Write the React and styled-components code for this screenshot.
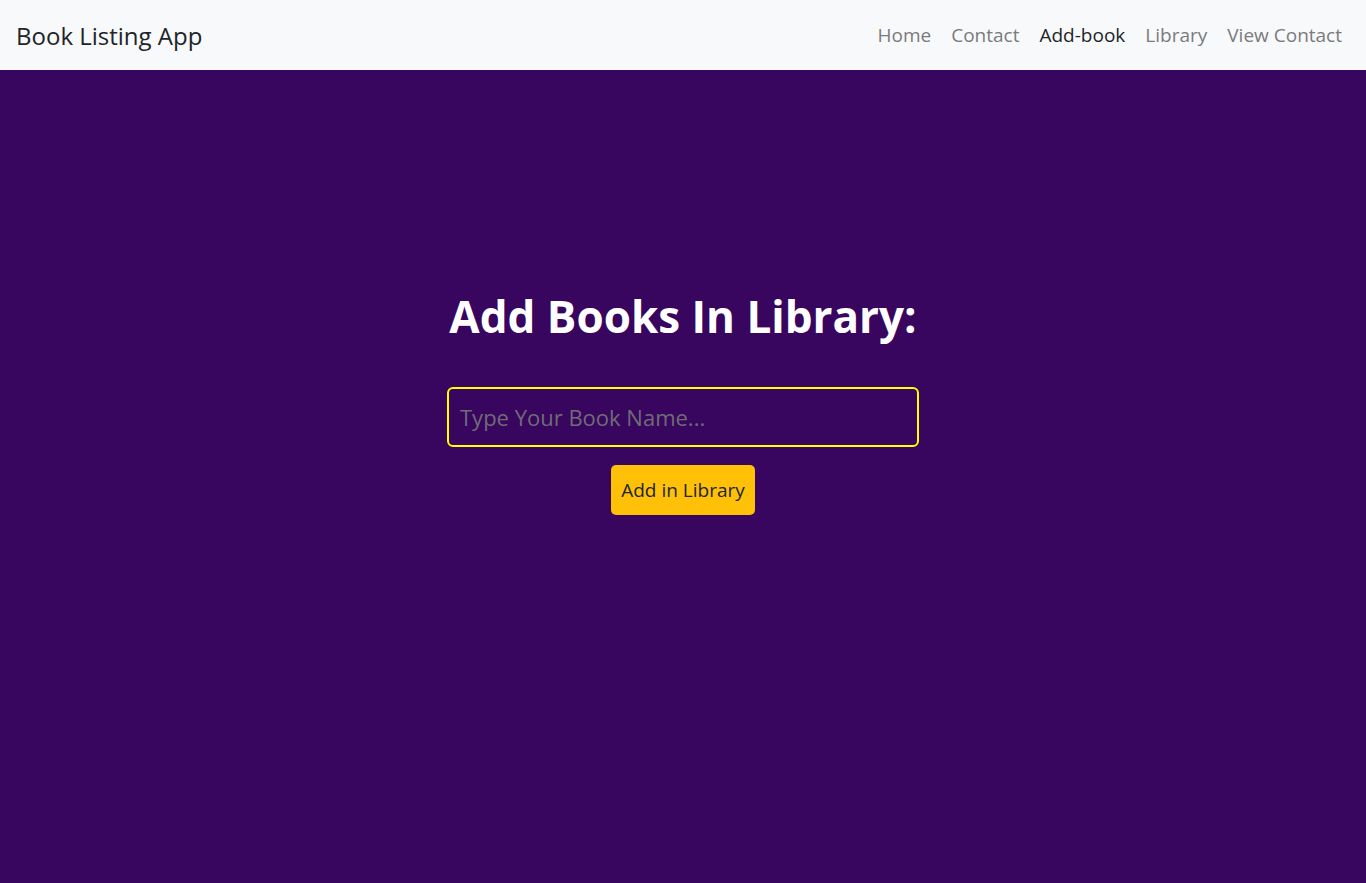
import React, { useState } from 'react'
import styled, { createGlobalStyle } from 'styled-components'

const GlobalStyle = createGlobalStyle`
  * { box-sizing: border-box; }
  html, body {
    margin: 0;
    padding: 0;
    height: 100%;
  }
  body {
    font-family: "Open Sans", "Noto Sans", sans-serif;
    background: #38055f;
  }
`

const links = ['Home', 'Contact', 'Add-book', 'Library', 'View Contact']

function App() {
    const [book, setBook] = useState('')

    const add = (e) => {
        e.preventDefault()
        setBook('')
    }

    return (
        <>
            <GlobalStyle />
            <Page>
                <NavBar>
                    <Brand href="#">Book Listing App</Brand>
                    <NavList>
                        {links.map((l) => (
                            <NavLink key={l} href="#" $active={l === 'Add-book'}>
                                {l}
                            </NavLink>
                        ))}
                    </NavList>
                </NavBar>
                <Main>
                    <Title>Add Books In Library:</Title>
                    <Form onSubmit={add}>
                        <BookInput
                            type="text"
                            value={book}
                            onChange={(e) => setBook(e.target.value)}
                            placeholder="Type Your Book Name..."
                        />
                        <AddButton type="submit">Add in Library</AddButton>
                    </Form>
                </Main>
            </Page>
        </>
    )
}

export default App

const Page = styled.div`
    min-height: 883px;
    display: flex;
    flex-direction: column;
    background: #38055f;
`

const NavBar = styled.nav`
    height: 70px;
    background: #f8f9fa;
    display: flex;
    align-items: center;
    justify-content: space-between;
    padding: 0 16px;
`

const Brand = styled.a`
    font-size: 24px;
    color: #212529;
    text-decoration: none;
`

const NavList = styled.div`
    display: flex;
    align-items: center;
`

const NavLink = styled.a`
    font-size: 19px;
    padding: 0 10px;
    text-decoration: none;
    color: ${(p) => (p.$active ? '#212529' : '#7a7b7d')};
    &:last-child {
        padding-right: 8px;
    }
`

const Main = styled.main`
    flex: 1;
    display: flex;
    flex-direction: column;
    align-items: center;
    padding-top: 220px;
`

const Title = styled.h1`
    margin: 0 0 44px;
    color: #fff;
    font-size: 44px;
    font-weight: 700;
    line-height: 1.2;
`

const Form = styled.form`
    display: flex;
    flex-direction: column;
    align-items: center;
`

const BookInput = styled.input`
    width: 472px;
    height: 60px;
    border: 2px solid #ffff00;
    border-radius: 6px;
    background: transparent;
    padding: 0 11px;
    font-family: inherit;
    font-size: 22px;
    color: #fff;
    outline: none;
    &::placeholder {
        color: #6f6c76;
    }
`

const AddButton = styled.button`
    margin-top: 18px;
    height: 50px;
    padding: 0 10px;
    border: none;
    border-radius: 5px;
    background: #ffc107;
    color: #212529;
    font-family: inherit;
    font-size: 19px;
    cursor: pointer;
`
